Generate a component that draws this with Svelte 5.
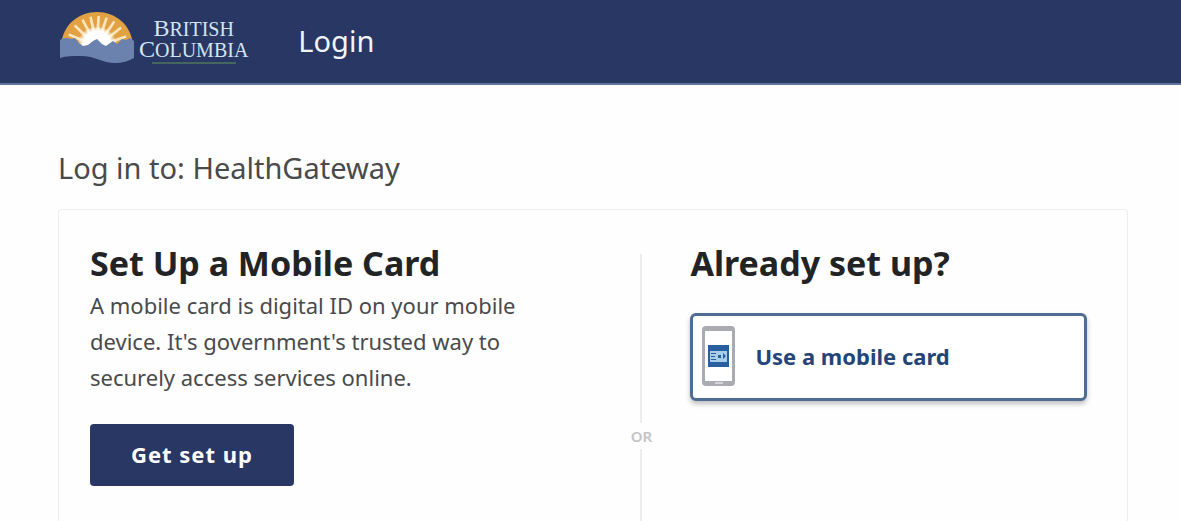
<script>
	const service = 'HealthGateway';

	// angles of the sun's rays, in degrees from vertical
	const rays = [-66, -46, -28, -12, 3, 18, 34, 51, 70];
</script>

<div class="page">
	<header>
		<a class="logo" href="/" aria-label="British Columbia">
			<svg class="sun" viewBox="0 0 74 52" width="74" height="52" aria-hidden="true">
				<defs>
					<radialGradient id="glow" gradientUnits="userSpaceOnUse" cx="37" cy="34" r="20">
						<stop offset="0.7" stop-color="#fff" />
						<stop offset="1" stop-color="#fff" stop-opacity="0" />
					</radialGradient>
				</defs>
				<path d="M1 34C3 13 19 1 37 1s34 12 36 33l-4 3H5z" fill="#e2a143" />
				{#each rays as angle}
					<path d="M35.500 20L35.800 5h2.400L38.500 20z" fill="#fbe6bd" transform="rotate({angle} 37 36)" />
				{/each}
				<path d="M17 36a20 20 0 0 1 40 0z" fill="url(#glow)" />
				<path
					d="M0 29c3-2 5-2 8-2l3 1 4-1 4 5 4 3 5-1 5-4 4-2 5 5 4 2 7-5 4 3 5-5 4 1 4-2 4 3v17c-5 3-12 5-19 5-13 0-20-7-34-7-8 0-15 0-21 2z"
					fill="#6c82ae"
				/>
			</svg>
			<span class="wordmark">
				<span>BRITISH</span>
				<span>COLUMBIA</span>
			</span>
		</a>
		<span class="title">Login</span>
	</header>

	<main>
		<h1>Log in to: {service}</h1>

		<div class="card">
			<section class="setup">
				<h2>Set Up a Mobile Card</h2>
				<p>A mobile card is digital ID on your mobile device. It's government's trusted way to securely access services online.</p>
				<button class="primary" type="button">Get set up</button>
			</section>

			<div class="divider">OR</div>

			<section class="login">
				<h2>Already set up?</h2>
				<button class="option" type="button">
					<svg viewBox="0 0 34 60" width="34" height="60" aria-hidden="true">
						<rect x="1" y="0" width="33" height="60" rx="4" fill="#a9abb0" />
						<rect x="4" y="5" width="27" height="50" fill="#fff" />
						<path d="M14 57h8" stroke="#d2d4d8" stroke-width="2" />
						<rect x="7" y="19" width="21" height="22" fill="#28609f" />
						<rect x="9" y="25" width="17" height="11" fill="#a9cde9" />
						<path d="M10 27.500h5M10 30.500h4M10 33.500h5" stroke="#28609f" fill="none" />
						<path d="M17 29h3v3h-3zM22 27l3 3-3 3z" fill="#28609f" />
					</svg>
					Use a mobile card
				</button>
			</section>
		</div>
	</main>
</div>

<style>
	:global(body) {
		margin: 0;
		background: #fefefe;
	}
	.page {
		display: flex;
		flex-direction: column;
		min-height: 100vh;
		font-family: 'Noto Sans', sans-serif;
		color: #494a4c;
	}
	header {
		display: flex;
		align-items: center;
		gap: 50px;
		box-sizing: border-box;
		height: 85px;
		padding: 0 60px 10px;
		background: #283763;
		border-bottom: 2px solid #5f729a;
	}
	.logo {
		display: flex;
		align-items: center;
		gap: 5px;
		color: #d5e4f0;
		text-decoration: none;
	}
	.sun {
		display: block;
	}
	.wordmark {
		display: flex;
		flex-direction: column;
		align-items: center;
		padding-top: 8px;
		font-family: 'Liberation Serif', serif;
		font-size: 20px;
		line-height: 20px;
	}
	.wordmark span::first-letter {
		font-size: 24px;
	}
	.wordmark::after {
		content: '';
		width: 84px;
		height: 2px;
		margin-top: 2px;
		background: #45665f;
	}
	.title {
		font-size: 29px;
		line-height: 36px;
		color: #f1f5fa;
		padding-top: 8px;
	}
	main {
		flex: 1;
		display: flex;
		flex-direction: column;
		padding: 63px 53px 0 58px;
	}
	h1 {
		margin: 0 0 21px;
		font-size: 29px;
		font-weight: 400;
		line-height: 40px;
	}
	.card {
		flex: 1;
		display: grid;
		grid-template-columns: 19fr 26px 15fr;
		gap: 36px;
		padding: 31px 40px 0 31px;
		border: 1px solid #efefef;
		border-bottom: 0;
		border-radius: 4px 4px 0 0;
	}
	h2 {
		margin: 0;
		font-size: 34px;
		font-weight: 700;
		line-height: 44px;
		color: #222325;
	}
	p {
		max-width: 450px;
		margin: 2px 0 29px;
		font-size: 22px;
		line-height: 36px;
	}
	button {
		font-family: inherit;
		font-weight: 700;
		font-size: 22px;
		cursor: pointer;
	}
	.primary {
		height: 62px;
		padding: 0 41px 2px;
		border: 0;
		border-radius: 4px;
		background: #283763;
		color: #fff;
		letter-spacing: 1px;
	}
	.divider {
		display: flex;
		flex-direction: column;
		align-items: center;
		padding-top: 13px;
		font-size: 15px;
		font-weight: 600;
		line-height: 26px;
		color: #c4c4c6;
	}
	.divider::before,
	.divider::after {
		content: '';
		flex: 7;
		width: 2px;
		background: #ededed;
	}
	.divider::after {
		flex: 3;
	}
	.option {
		display: flex;
		align-items: center;
		gap: 20px;
		width: 100%;
		height: 88px;
		margin-top: 28px;
		padding: 0 8px 2px;
		border: 3px solid #4f6c95;
		border-radius: 6px;
		background: #fff;
		box-shadow: 0 3px 5px rgba(0, 0, 0, .25);
		color: #254577;
		text-align: left;
	}
</style>
